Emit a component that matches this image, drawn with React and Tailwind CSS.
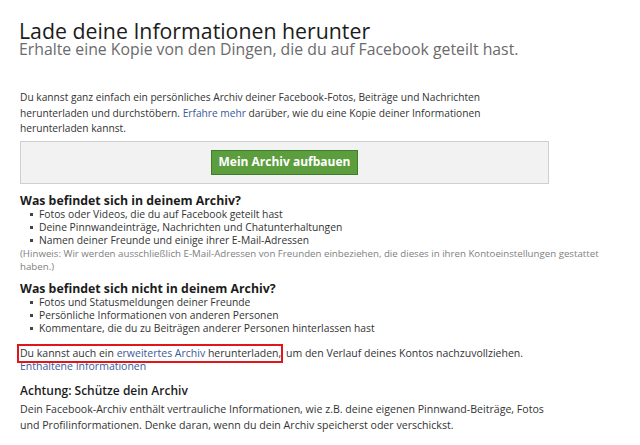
export default function App() {
  const Bullet = () => <span className="w-[3px] h-[3px] bg-[#444] inline-block shrink-0" />;
  return (
    <div className="w-[640px] h-[445px] bg-white overflow-hidden" style={{ fontFamily: '"Open Sans", sans-serif' }}>
      <div className="pl-[19px] pt-[22px] w-[620px]">
        <h1 className="text-[21.3px] leading-[18px] text-[#1c1c1c]">Lade deine Informationen herunter</h1>
        <h2 className="mt-[1px] text-[15.8px] leading-[16px] text-[#6b6b6b]">Erhalte eine Kopie von den Dingen, die du auf Facebook geteilt hast.</h2>
        <p className="mt-[33px] text-[10.2px] leading-[15.5px] text-[#333] pl-px">
          Du kannst ganz einfach ein persönliches Archiv deiner Facebook-Fotos, Beiträge und Nachrichten
          <br />
          herunterladen und durchstöbern. <span className="text-[#3b5998]">Erfahre mehr</span> darüber, wie du eine Kopie deiner Informationen
          <br />
          herunterladen kannst.
        </p>
        <div className="mt-[4px] ml-px w-[529px] h-[43px] bg-[#f2f2f2] border border-[#cfcfcf] flex items-center justify-center">
          <div className="w-[147px] h-[25px] bg-[#5c9e3d] border border-[#3f7d2a] flex items-center justify-center text-white font-bold text-[12px]">
            Mein Archiv aufbauen
          </div>
        </div>
        <div className="mt-[9px] pl-px">
          <div className="text-[12.3px] leading-[15px] font-bold text-[#1c1c1c]">Was befindet sich in deinem Archiv?</div>
          <ul className="text-[10.3px] leading-[13px] text-[#333] pl-[10px]">
            <li className="flex items-center gap-[6px]"><Bullet />Fotos oder Videos, die du auf Facebook geteilt hast</li>
            <li className="flex items-center gap-[6px]"><Bullet />Deine Pinnwandeinträge, Nachrichten und Chatunterhaltungen</li>
            <li className="flex items-center gap-[6px]"><Bullet />Namen deiner Freunde und einige ihrer E-Mail-Adressen</li>
          </ul>
          <p className="text-[9.7px] leading-[13px] text-[#808080]">
            (Hinweis: Wir werden ausschließlich E-Mail-Adressen von Freunden einbeziehen, die dieses in ihren Kontoeinstellungen gestattet
            <br />
            haben.)
          </p>
        </div>
        <div className="mt-[8px] pl-px">
          <div className="text-[12.3px] leading-[15px] font-bold text-[#1c1c1c]">Was befindet sich nicht in deinem Archiv?</div>
          <ul className="text-[10.3px] leading-[13px] text-[#333] pl-[10px]">
            <li className="flex items-center gap-[6px]"><Bullet />Fotos und Statusmeldungen deiner Freunde</li>
            <li className="flex items-center gap-[6px]"><Bullet />Persönliche Informationen von anderen Personen</li>
            <li className="flex items-center gap-[6px]"><Bullet />Kommentare, die du zu Beiträgen anderer Personen hinterlassen hast</li>
          </ul>
        </div>
        <div className="mt-[12px] text-[10.5px] leading-[13px] text-[#333]">
          <div className="relative">
            <span className="absolute left-[-2px] top-[-3px] w-[266px] h-[19px] border-2 border-[#e0161b]" />
            <span className="pl-px">Du kannst auch ein </span><span className="text-[#3b5998]">erweitertes Archiv</span> herunterladen, <span className="ml-[2px]">um den Verlauf deines Kontos nachzuvollziehen.</span>
          </div>
          <div className="text-[#3b5998] pl-px">Enthaltene Informationen</div>
        </div>
        <div className="mt-[11px] pl-px">
          <div className="text-[12px] leading-[14px] font-semibold text-[#1c1c1c]">Achtung: Schütze dein Archiv</div>
          <p className="mt-[3px] text-[10.6px] leading-[16.5px] text-[#333]">
            Dein Facebook-Archiv enthält vertrauliche Informationen, wie z.B. deine eigenen Pinnwand-Beiträge, Fotos
            <br />
            und Profilinformationen. Denke daran, wenn du dein Archiv speicherst oder verschickst.
          </p>
        </div>
      </div>
    </div>
  );
}
